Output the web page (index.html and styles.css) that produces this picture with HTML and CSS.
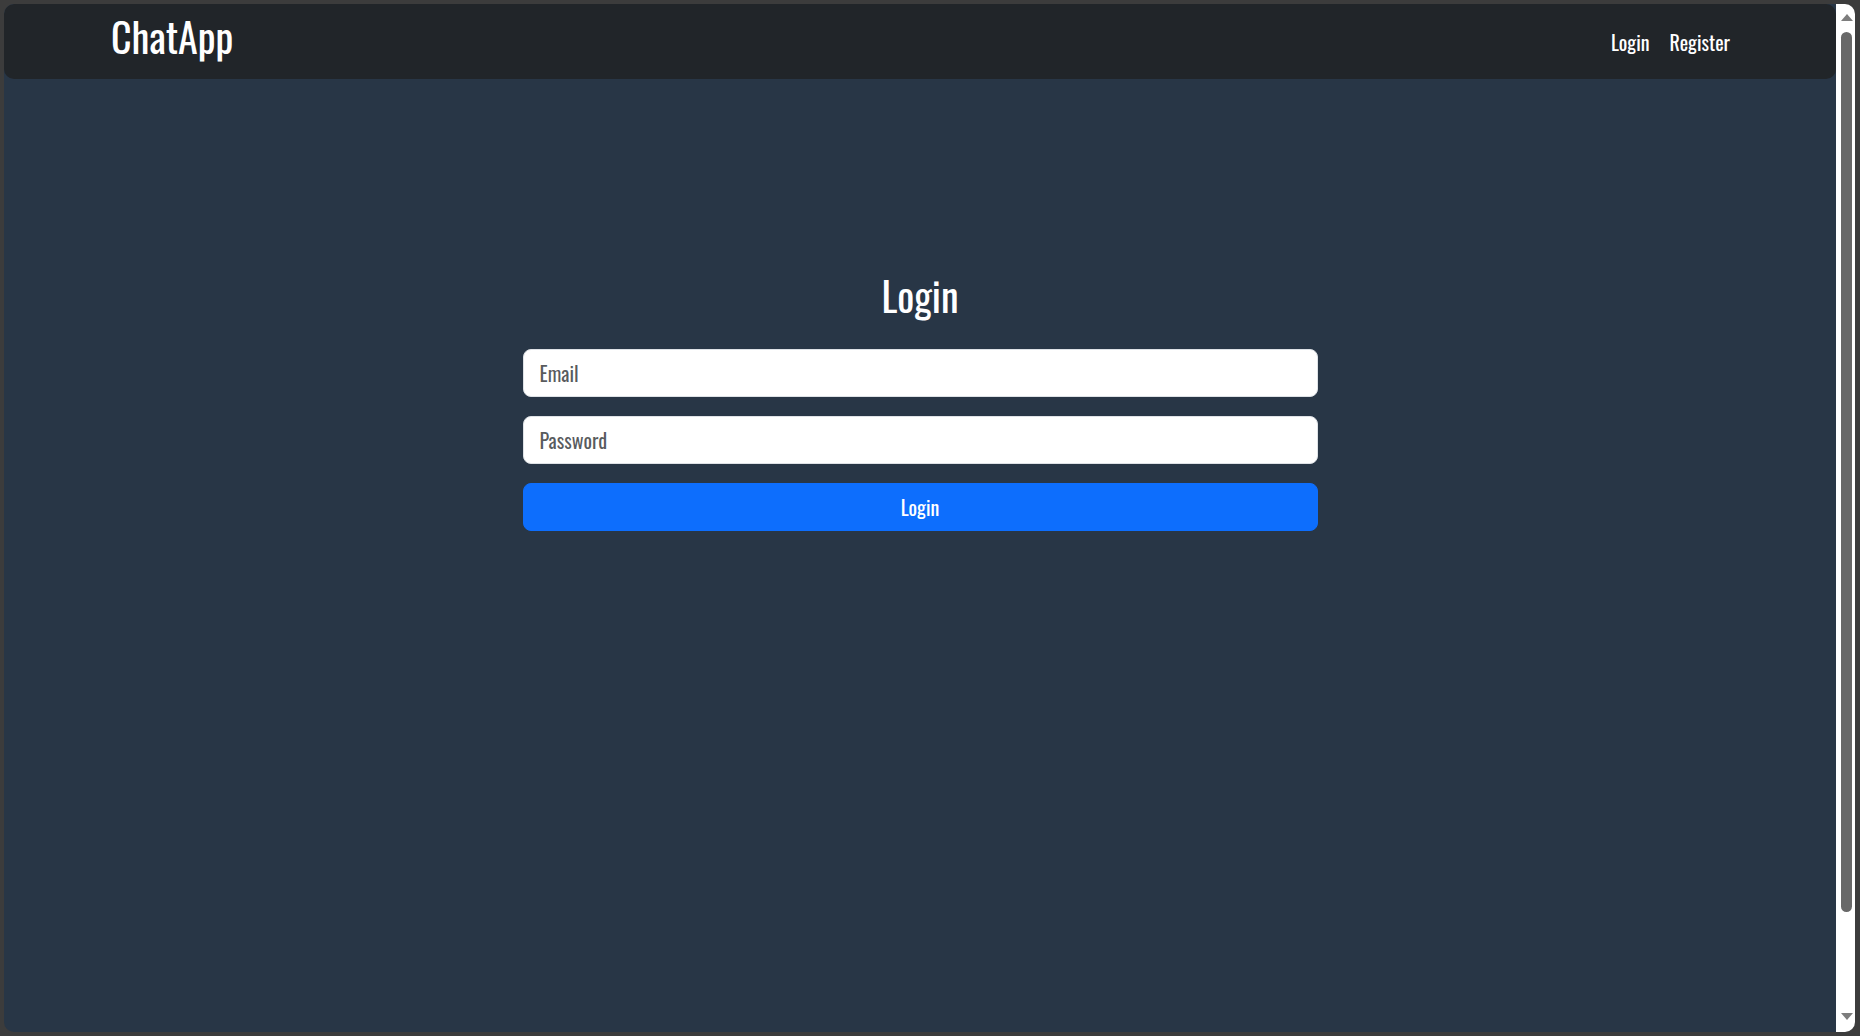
FILE: index.html
```html
<!DOCTYPE html>
<html lang="en">
<head>
<meta charset="utf-8">
<title>ChatApp</title>
<link rel="stylesheet" href="styles.css">
</head>
<body>
<div class="window">
  <div class="page">
    <nav class="navbar">
      <a class="brand" href="#">ChatApp</a>
      <div class="nav-links">
        <a class="nav-link" href="#">Login</a>
        <a class="nav-link" href="#">Register</a>
      </div>
    </nav>
    <main class="main">
      <h2 class="title">Login</h2>
      <form class="form">
        <input class="field" type="email" placeholder="Email">
        <input class="field" type="password" placeholder="Password">
        <button class="btn" type="button">Login</button>
      </form>
    </main>
  </div>
  <div class="scrollbar">
    <svg class="arrow arrow-up" width="12" height="7" viewBox="0 0 12 7"><polygon points="6,0 12,7 0,7" fill="#7d7d7d"/></svg>
    <div class="thumb"></div>
    <div class="track-rest"></div>
    <svg class="arrow arrow-down" width="12" height="7" viewBox="0 0 12 7"><polygon points="0,0 12,0 6,7" fill="#7d7d7d"/></svg>
  </div>
</div>
</body>
</html>
```
FILE: styles.css
```css
* { box-sizing: border-box; }
html, body { margin: 0; padding: 0; }
body {
  background: #3c3c3c;
  font-family: "Oswald", "Roboto Condensed", "Liberation Sans", sans-serif;
  color: #fff;
  height: 1036px;
  overflow: hidden;
  padding: 4px 5px 4px 4px;
}
.window {
  display: flex;
  height: 1028px;
  border-radius: 10px;
  overflow: hidden;
}
.page {
  flex: 1;
  background: #283646;
  display: flex;
  flex-direction: column;
}
.navbar {
  height: 75px;
  flex: 0 0 75px;
  background: #212529;
  border-radius: 10px;
  display: flex;
  align-items: flex-start;
  justify-content: space-between;
  padding: 0 106px 0 107px;
}
.brand {
  font-size: 40px;
  line-height: 48px;
  font-weight: 400;
  color: #fff;
  text-decoration: none;
  margin-top: 8px;
}
.nav-links {
  display: flex;
  gap: 20px;
  margin-top: 23px;
}
.nav-link {
  font-size: 20px;
  line-height: 30px;
  color: #fff;
  text-decoration: none;
}
.main {
  padding-top: 192px;
  display: flex;
  flex-direction: column;
  align-items: center;
}
.title {
  margin: 0 0 30px;
  font-size: 40px;
  line-height: 48px;
  font-weight: 400;
  text-align: center;
}
.form {
  width: 795px;
  display: flex;
  flex-direction: column;
  gap: 19px;
}
.field, .btn {
  height: 48px;
  border-radius: 8px;
  font-family: inherit;
  font-size: 20px;
  line-height: 30px;
  padding: 8px 16px;
  margin: 0;
}
.field {
  background: #fff;
  border: 1px solid #dee2e6;
  color: #212529;
  outline: none;
}
.field::placeholder { color: rgba(33, 37, 41, 0.75); }
.btn {
  background: #0d6efd;
  border: 1px solid #0d6efd;
  color: #fff;
  text-align: center;
}
.scrollbar {
  width: 19px;
  flex: 0 0 19px;
  background: #fff;
  display: flex;
  flex-direction: column;
  align-items: flex-start;
  padding: 10px 0 12px 5px;
}
.arrow { display: block; }
.arrow-up { margin-bottom: 11px; }
.thumb {
  width: 11px;
  height: 880px;
  background: #686868;
  border-radius: 6px;
}
.track-rest { flex: 1; }
```
